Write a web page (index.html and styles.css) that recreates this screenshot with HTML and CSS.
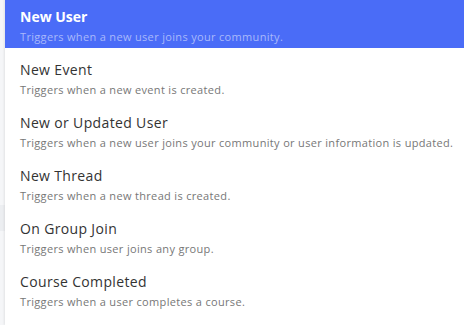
FILE: index.html
```html
<!DOCTYPE html>
<html>
<head>
<meta charset="utf-8">
<link rel="stylesheet" href="styles.css">
</head>
<body>
<div class="page">
  <div class="side"><div class="side-band"></div></div>
  <ul class="menu">
    <li class="item active">
      <div class="title">New User</div>
      <div class="desc">Triggers when a new user joins your community.</div>
    </li>
    <li class="item">
      <div class="title">New Event</div>
      <div class="desc">Triggers when a new event is created.</div>
    </li>
    <li class="item">
      <div class="title">New or Updated User</div>
      <div class="desc">Triggers when a new user joins your community or user information is updated.</div>
    </li>
    <li class="item">
      <div class="title">New Thread</div>
      <div class="desc">Triggers when a new thread is created.</div>
    </li>
    <li class="item">
      <div class="title">On Group Join</div>
      <div class="desc">Triggers when user joins any group.</div>
    </li>
    <li class="item">
      <div class="title">Course Completed</div>
      <div class="desc">Triggers when a user completes a course.</div>
    </li>
  </ul>
</div>
</body>
</html>
```
FILE: styles.css
```css
html, body {
  margin: 0;
  padding: 0;
  background: #f5f6f8;
  overflow: hidden;
}
.page {
  display: flex;
  height: 325px;
}
.side {
  width: 5px;
  flex: none;
  display: flex;
  flex-direction: column;
  padding-top: 205px;
}
.side-band {
  height: 26px;
  background: #eceef1;
}
.menu {
  list-style: none;
  margin: -5px 0 0 0;
  padding: 0;
  flex: 1;
  min-width: 0;
  background: #fff;
  box-shadow: -1px 0 2px rgba(0,0,0,0.08);
  font-family: "Open Sans", sans-serif;
}
.item {
  height: 53px;
  box-sizing: border-box;
  padding: 12px 0 0 15px;
  white-space: nowrap;
}
.title {
  font-size: 14px;
  line-height: 20px;
  letter-spacing: 0.35px;
  color: #333;
}
.desc {
  font-size: 11px;
  line-height: 20px;
  letter-spacing: 0.33px;
  color: #777;
}
.active {
  background: #4a6cf7;
}
.active .title {
  color: #fff;
  font-weight: bold;
  letter-spacing: 0;
}
.active .desc {
  color: #a9b9fb;
}
```
